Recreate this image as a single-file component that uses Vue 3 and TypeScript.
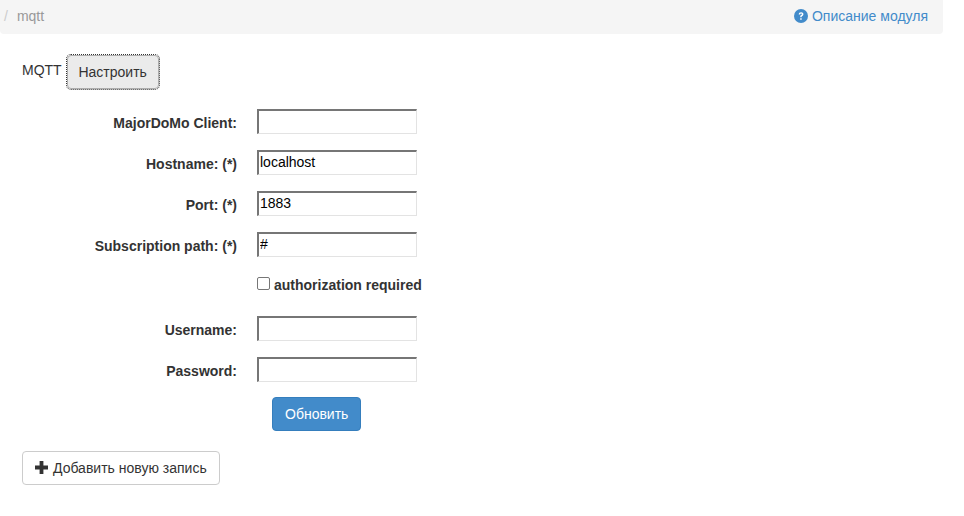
<script setup lang="ts">
interface Field {
  label: string;
  value: string;
}

const topFields: Field[] = [
  { label: "MajorDoMo Client:", value: "" },
  { label: "Hostname: (*)", value: "localhost" },
  { label: "Port: (*)", value: "1883" },
  { label: "Subscription path: (*)", value: "#" },
];

const authFields: Field[] = [
  { label: "Username:", value: "" },
  { label: "Password:", value: "" },
];
</script>

<template>
  <div class="page">
    <header class="crumbs">
      <span class="crumbs__sep">/</span>
      <span class="crumbs__current">mqtt</span>
      <a class="crumbs__help" href="#">
        <svg class="crumbs__icon" viewBox="0 0 14 14" width="14" height="14">
          <circle cx="7" cy="7" r="7" fill="#428bca" />
          <path
            d="M4.7 5.4c.1-1.4 1-2.1 2.4-2.1 1.3 0 2.3.7 2.3 1.9 0 .9-.5 1.3-1.1 1.7-.5.3-.7.5-.7 1v.3H6.2v-.5c0-.8.3-1.2.9-1.6.5-.3.8-.5.8-.9 0-.4-.3-.7-.8-.7s-.9.3-.9.9zM6.2 9.2h1.5v1.5H6.2z"
            fill="#fff"
          />
        </svg>
        Описание модуля
      </a>
    </header>

    <main class="content">
      <div class="toolbar">
        <span class="toolbar__title">MQTT</span>
        <button class="btn btn--focused" type="button">Настроить</button>
      </div>

      <form class="form" @submit.prevent>
        <template v-for="field in topFields" :key="field.label">
          <label class="form__label">{{ field.label }}</label>
          <input class="form__input" type="text" :value="field.value" />
        </template>

        <label class="form__check">
          <span class="form__box" />
          authorization required
        </label>

        <template v-for="field in authFields" :key="field.label">
          <label class="form__label">{{ field.label }}</label>
          <input class="form__input" type="text" :value="field.value" />
        </template>

        <button class="btn btn--primary" type="submit">Обновить</button>
      </form>

      <button class="btn btn--add" type="button">
        <svg viewBox="0 0 14 14" width="14" height="14">
          <path d="M4.6 0h3.8v4.6H13v3.8H8.4V13H4.6V8.4H0V4.6h4.6z" fill="#333" />
        </svg>
        Добавить новую запись
      </button>
    </main>
  </div>
</template>

<style>
body {
  background: #fff;
}
</style>

<style scoped>
.page {
  width: 964px;
  height: 516px;
  overflow: hidden;
  font-family: "Liberation Sans", Arial, sans-serif;
  font-size: 14px;
  line-height: 20px;
  color: #333;
}

.crumbs {
  width: 943px;
  height: 34px;
  box-sizing: border-box;
  display: flex;
  align-items: center;
  padding: 0 15px 3px 4px;
  background: #f5f5f5;
  border-radius: 0 0 4px 4px;
}

.crumbs__sep {
  color: #ccc;
  margin-right: 9px;
}

.crumbs__current {
  color: #999;
}

.crumbs__help {
  margin-left: auto;
  display: flex;
  align-items: center;
  gap: 4px;
  color: #428bca;
  text-decoration: none;
}

.content {
  padding: 21px 0 0 22px;
}

.toolbar {
  display: flex;
  align-items: flex-start;
  gap: 5px;
}

.toolbar__title {
  padding-top: 5px;
}

.btn {
  font: inherit;
  height: 34px;
  padding: 0 12px;
  border: 1px solid #ccc;
  border-radius: 4px;
  background: #fff;
  color: #333;
}

.btn--focused {
  width: 92px;
  padding: 0;
  background: #ebebeb;
  border-color: #adadad;
  outline: 1px dotted #333;
}

.btn--primary {
  grid-column: 2;
  justify-self: start;
  margin: -1px 0 0 15px;
  width: 89px;
  color: #fff;
  background: #428bca;
  border-color: #357ebd;
}

.btn--add {
  display: flex;
  align-items: center;
  gap: 4px;
  width: 198px;
  margin-top: 20px;
}

.form {
  display: grid;
  grid-template-columns: 215px 160px;
  column-gap: 20px;
  row-gap: 16px;
  align-items: center;
  margin-top: 20px;
}

.form__label {
  padding-top: 2px;
  font-weight: 700;
  text-align: right;
}

.form__input {
  box-sizing: border-box;
  width: 160px;
  height: 25px;
  padding: 0 0 3px 1px;
  border-style: solid;
  border-width: 2px 1px 1px 2px;
  border-color: #767676 #e3e3e3 #e3e3e3 #767676;
  font: 14px "Liberation Sans", Arial, sans-serif;
  color: #000;
  outline: none;
}

.form__check {
  grid-column: 2;
  display: flex;
  align-items: flex-start;
  gap: 4px;
  height: 27px;
  box-sizing: border-box;
  padding-top: 2px;
  font-weight: 700;
  white-space: nowrap;
}

.form__box {
  flex: none;
  box-sizing: border-box;
  width: 13px;
  height: 13px;
  margin-top: 2px;
  border: 1px solid #767676;
  border-radius: 2px;
  background: #fff;
}
</style>
